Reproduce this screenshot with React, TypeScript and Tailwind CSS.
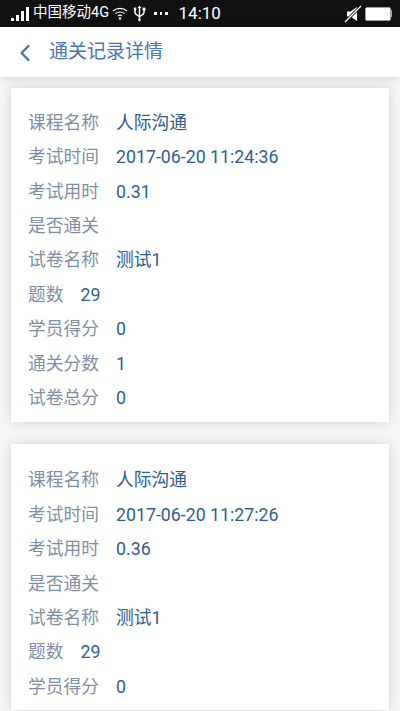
import { ChevronLeft } from 'lucide-react'

const font = "[font-family:'Roboto','Noto_Sans_CJK_SC',sans-serif]"

const records = [
  [
    ['课程名称', '人际沟通'],
    ['考试时间', '2017-06-20 11:24:36'],
    ['考试用时', '0.31'],
    ['是否通关', ''],
    ['试卷名称', '测试1'],
    ['题数', '29'],
    ['学员得分', '0'],
    ['通关分数', '1'],
    ['试卷总分', '0'],
  ],
  [
    ['课程名称', '人际沟通'],
    ['考试时间', '2017-06-20 11:27:26'],
    ['考试用时', '0.36'],
    ['是否通关', ''],
    ['试卷名称', '测试1'],
    ['题数', '29'],
    ['学员得分', '0'],
  ],
]

function StatusBar() {
  return (
    <div className="h-[27px] shrink-0 bg-[#111111] flex items-center text-white pl-[11px] pr-[8px]">
      <svg width="18" height="16" viewBox="0 0 18 16" fill="white" className="shrink-0">
        <rect x="0" y="12" width="3" height="3" />
        <rect x="5" y="9" width="3" height="6" />
        <rect x="10" y="5" width="3" height="10" />
        <rect x="15" y="1" width="3" height="14" />
      </svg>
      <span className="text-[14.5px] ml-[4px] leading-none whitespace-nowrap">中国移动4G</span>
      <svg width="16" height="16" viewBox="0 0 16 16" fill="none" stroke="white" className="ml-[3px]">
        <path d="M1 5 C5 1.5 11 1.5 15 5" strokeWidth="1.2" />
        <path d="M3.5 7.5 C6 5.5 10 5.5 12.5 7.5" strokeWidth="1.2" />
        <path d="M6 10 C7.2 9 8.8 9 10 10" strokeWidth="1.2" />
        <circle cx="8" cy="12.5" r="1.2" fill="white" stroke="none" />
      </svg>
      <svg width="13" height="17" viewBox="0 0 13 17" fill="none" stroke="white" strokeWidth="1.5" className="ml-[5px]">
        <path d="M6.5 2 V15" />
        <path d="M2 5 V7.5 C2 9.5 4 10 6.5 11.5 C9 10 11 9.5 11 7.5 V5" />
        <circle cx="6.5" cy="15" r="1.2" fill="white" stroke="none" />
        <path d="M4.5 3 L6.5 0.5 L8.5 3 Z" fill="white" stroke="none" />
        <circle cx="2" cy="4" r="1.4" fill="white" stroke="none" />
        <rect x="9.6" y="2.6" width="2.8" height="2.8" fill="white" stroke="none" />
      </svg>
      <div className="flex gap-[3px] ml-[8px]">
        <span className="w-[2.5px] h-[2.5px] bg-white" />
        <span className="w-[2.5px] h-[2.5px] bg-white" />
        <span className="w-[2.5px] h-[2.5px] bg-white" />
      </div>
      <span className="text-[17px] ml-[11px] leading-none">14:10</span>
      <svg width="18" height="18" viewBox="0 0 18 18" fill="white" className="ml-auto">
        <path d="M3 6.5 H6.5 L13 2 V16 L6.5 11.5 H3 Z" />
        <path d="M1 17 L17 1" stroke="#111111" strokeWidth="3" />
        <path d="M1 17 L17 1" stroke="white" strokeWidth="1.2" />
      </svg>
      <div className="flex items-center ml-[3px]">
        <div className="w-[26px] h-[14px] rounded-[2px] border border-[#a0a0a0] bg-white" />
        <div className="w-[1px] h-[7px] bg-[#a0a0a0]" />
      </div>
    </div>
  )
}

export default function App() {
  return (
    <div className={`h-[711px] overflow-hidden flex flex-col bg-[#f7f7f7] ${font}`}>
      <StatusBar />
      <div className="h-[50px] shrink-0 bg-white flex items-center pt-[1px] relative z-10 shadow-[0_2px_8px_rgba(0,0,0,0.12)]">
        <ChevronLeft size={28} strokeWidth={2} className="text-[#4a73a5] ml-[11px]" />
        <h1 className="text-[19px] text-[#4a74a8] ml-[10px] font-normal">通关记录详情</h1>
      </div>
      <div className="flex flex-col gap-[22px] mx-[11px] mt-[11px]">
        {records.map((rows, i) => (
          <div key={i} className="bg-white shadow-[0_0_12px_rgba(0,0,0,0.16)] pt-[20px] first:pt-[18px] pb-[6px] pl-[17px] shrink-0">
            {rows.map(([label, value]) => (
              <div key={label} className="h-[34.4px] flex items-center text-[17.75px]">
                <span className="text-[#7f8fa3]">{label}</span>
                <span className="text-[#2f5d8f] ml-[17px]">{value}</span>
              </div>
            ))}
          </div>
        ))}
      </div>
    </div>
  )
}
